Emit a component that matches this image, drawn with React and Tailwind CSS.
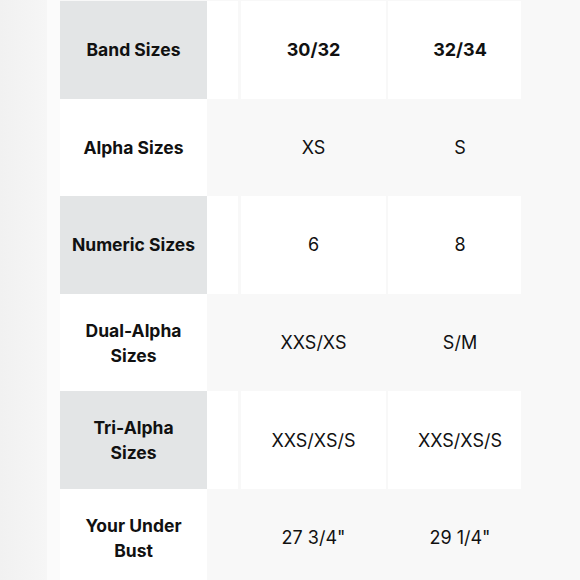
const rows = [
  { label: 'Band Sizes', a: '30/32', b: '32/34', head: true },
  { label: 'Alpha Sizes', a: 'XS', b: 'S' },
  { label: 'Numeric Sizes', a: '6', b: '8' },
  { label: ['Dual-Alpha', 'Sizes'], a: 'XXS/XS', b: 'S/M' },
  { label: ['Tri-Alpha', 'Sizes'], a: 'XXS/XS/S', b: 'XXS/XS/S' },
  { label: ['Your Under', 'Bust'], a: '27 3/4"', b: '29 1/4"' },
];

const Row = ({ row, odd }) => {
  const cell = odd ? 'bg-white' : 'bg-[#f8f8f8]';
  const valueText = row.head ? 'font-bold' : 'font-normal';
  return (
    <div className="flex h-[97.6px] shrink-0">
      <div
        className={`flex w-[147px] flex-col items-center justify-center text-center text-[17.5px] font-bold leading-[25px] ${
          odd ? 'bg-[#e3e5e6]' : 'bg-white'
        }`}
      >
        {Array.isArray(row.label) ? row.label.map((l) => <span key={l}>{l}</span>) : row.label}
      </div>
      <div className={`w-[31px] ${cell}`} />
      <div className="w-[3px]" />
      <div className={`flex w-[145px] items-center justify-center text-[18px] ${valueText} ${cell}`}>
        {row.a}
      </div>
      <div className="w-[2px]" />
      <div className={`flex w-[133px] items-center justify-center pl-[11px] text-[18px] ${valueText} ${cell}`}>
        {row.b}
      </div>
    </div>
  );
};

export default function App() {
  return (
    <div
      className="flex h-[580px] w-[580px] overflow-hidden bg-[#f8f8f8] text-[#111]"
      style={{ fontFamily: 'Inter, "Liberation Sans", sans-serif' }}
    >
      <div className="w-[47px] bg-gradient-to-r from-[#f1f1f1] to-[#f6f6f6]" />
      <div className="w-[13px] bg-[#fbfbfb]" />
      <div className="flex flex-col pt-px">
        {rows.map((row, i) => (
          <Row key={i} row={row} odd={i % 2 === 0} />
        ))}
      </div>
    </div>
  );
}
